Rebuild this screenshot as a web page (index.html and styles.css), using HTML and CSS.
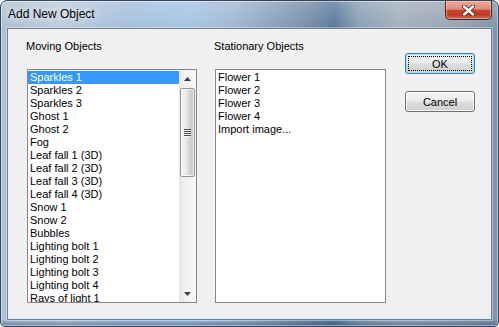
FILE: index.html
```html
<!DOCTYPE html>
<html lang="en">
<head>
    <meta charset="UTF-8">
    <title>Add New Object</title>
    <link rel="stylesheet" href="styles.css">
</head>
<body>
    <div class="window">
        <div class="titlebar">
            <span class="title">Add New Object</span>
            <div class="close">
                <svg width="13" height="11" viewBox="0 0 13 11">
                    <path d="M2 1.5 L11 9.5 M11 1.5 L2 9.5" stroke="#5b2218" stroke-width="4.2" stroke-linecap="round"/>
                    <path d="M2 1.5 L11 9.5 M11 1.5 L2 9.5" stroke="#ffffff" stroke-width="2.4" stroke-linecap="round"/>
                </svg>
            </div>
        </div>

        <div class="client">
            <div class="col col-moving">
                <div class="label">Moving Objects</div>
                <div class="listbox">
                    <div class="items">
                        <div class="item selected">Sparkles 1</div>
                        <div class="item">Sparkles 2</div>
                        <div class="item">Sparkles 3</div>
                        <div class="item">Ghost 1</div>
                        <div class="item">Ghost 2</div>
                        <div class="item">Fog</div>
                        <div class="item">Leaf fall 1 (3D)</div>
                        <div class="item">Leaf fall 2 (3D)</div>
                        <div class="item">Leaf fall 3 (3D)</div>
                        <div class="item">Leaf fall 4 (3D)</div>
                        <div class="item">Snow 1</div>
                        <div class="item">Snow 2</div>
                        <div class="item">Bubbles</div>
                        <div class="item">Lighting bolt 1</div>
                        <div class="item">Lighting bolt 2</div>
                        <div class="item">Lighting bolt 3</div>
                        <div class="item">Lighting bolt 4</div>
                        <div class="item">Rays of light 1</div>
                    </div>
                    <div class="scrollbar">
                        <div class="sb-btn">
                            <svg width="7" height="4" viewBox="0 0 7 4"><polygon points="0,4 3.5,0 7,4" fill="#3d3d3d"/></svg>
                        </div>
                        <div class="sb-track">
                            <div class="thumb">
                                <div class="grip"></div>
                            </div>
                        </div>
                        <div class="sb-btn">
                            <svg width="7" height="4" viewBox="0 0 7 4"><polygon points="0,0 7,0 3.5,4" fill="#3d3d3d"/></svg>
                        </div>
                    </div>
                </div>
            </div>

            <div class="col col-stationary">
                <div class="label">Stationary Objects</div>
                <div class="listbox">
                    <div class="items">
                        <div class="item">Flower 1</div>
                        <div class="item">Flower 2</div>
                        <div class="item">Flower 3</div>
                        <div class="item">Flower 4</div>
                        <div class="item">Import image...</div>
                    </div>
                </div>
            </div>

            <div class="buttons">
                <button class="btn default">OK</button>
                <button class="btn">Cancel</button>
            </div>
        </div>
    </div>
</body>
</html>
```

FILE: styles.css
```css
* {
    margin: 0;
    padding: 0;
    box-sizing: border-box;
}

body {
    width: 499px;
    height: 327px;
    overflow: hidden;
    background: #ffffff;
    font-family: "Liberation Sans", Arial, sans-serif;
    font-size: 11px;
    color: #000;
}

/* window frame (aero glass look) */
.window {
    width: 499px;
    height: 327px;
    border: 1px solid #34465b;
    border-radius: 7px 7px 5px 5px;
    padding: 0 6px 6px 6px;
    display: flex;
    flex-direction: column;
    background:
        linear-gradient(0deg, rgba(30, 65, 110, 0.5) 0, rgba(30, 65, 110, 0) 7px),
        linear-gradient(180deg, rgba(255, 255, 255, 0.2) 0, rgba(255, 255, 255, 0) 28px),
        linear-gradient(90deg, #afc0d2 0%, #bccbdb 12%, #a5bfdc 25%, #a6c3e5 38%, #9fb7d1 47%,
            #859eb8 56%, #738ca6 62%, #587a9c 67%, #899fb3 72%, #a2afbc 80%, #99a6b3 90%, #8194a9 100%);
    box-shadow: inset 0 0 0 1px rgba(255, 255, 255, 0.45);
}

.titlebar {
    height: 27px;
    display: flex;
    align-items: flex-start;
}

.title {
    margin-left: 1px;
    padding-top: 6px;
    font-size: 12px;
    line-height: 15px;
    color: #000;
    text-shadow: 0 0 6px rgba(255, 255, 255, 0.9), 0 0 10px rgba(255, 255, 255, 0.6);
}

.close {
    margin-left: auto;
    width: 47px;
    height: 19px;
    border: 1px solid #5c2219;
    border-top: none;
    border-radius: 0 0 5px 5px;
    background: linear-gradient(180deg, #e8aa9c 0%, #dc8e7d 45%, #c9462f 52%, #bf3a22 75%, #d4684f 100%);
    box-shadow: inset 0 0 0 1px rgba(255, 220, 210, 0.45);
    display: flex;
    align-items: center;
    justify-content: center;
    padding-top: 1px;
}

/* client area */
.client {
    flex: 1;
    background: #f0f0f0;
    border: 1px solid #6b7f96;
    box-shadow: 0 0 0 1px rgba(255, 255, 255, 0.35);
    display: flex;
    align-items: flex-start;
    padding: 11px 0 0 18px;
}

.col-moving {
    width: 171px;
}

.col-stationary {
    width: 172px;
    margin-left: 17px;
}

.label {
    line-height: 13px;
    margin-bottom: 16px;
}

.listbox {
    margin-left: 1px;
    height: 234px;
    border: 1px solid #828790;
    background: #fff;
    display: flex;
}

.items {
    flex: 1;
    overflow: hidden;
    padding-top: 1px;
}

.item {
    height: 13px;
    line-height: 13px;
    padding-left: 2px;
    white-space: nowrap;
}

.item.selected {
    background: #3399ff;
    color: #fff;
}

/* scrollbar */
.scrollbar {
    width: 17px;
    display: flex;
    flex-direction: column;
    background: linear-gradient(90deg, #e6e6e6 0%, #f2f2f2 40%, #f6f6f6 100%);
}

.sb-btn {
    height: 17px;
    display: flex;
    align-items: center;
    justify-content: center;
}

.sb-track {
    flex: 1;
    padding: 1px 1px 0 1px;
}

.thumb {
    height: 89px;
    border: 1px solid #959595;
    border-radius: 2px;
    background: linear-gradient(90deg, #f4f4f4 0%, #e9e9e9 45%, #d9d9d9 55%, #c4c4c4 100%);
    box-shadow: inset 0 0 0 1px rgba(255, 255, 255, 0.7);
    display: flex;
    align-items: center;
    justify-content: center;
}

.grip {
    width: 7px;
    height: 8px;
    background: repeating-linear-gradient(180deg, #4e4e4e 0, #4e4e4e 1px, #f4f4f4 1px, #f4f4f4 2px);
}

/* buttons */
.buttons {
    width: 70px;
    margin-left: 19px;
    padding-top: 13px;
    display: flex;
    flex-direction: column;
    gap: 17px;
}

.btn {
    position: relative;
    width: 70px;
    height: 21px;
    border: 1px solid #707070;
    border-radius: 3px;
    background: linear-gradient(180deg, #f2f2f2 0%, #ebebeb 48%, #dddddd 52%, #cfcfcf 100%);
    box-shadow: inset 0 0 0 1px rgba(255, 255, 255, 0.8);
    font-family: "Liberation Sans", Arial, sans-serif;
    font-size: 11px;
    color: #000;
}

.btn.default {
    border-color: #3c7fb1;
    box-shadow: inset 0 0 0 1px #9fdcf5;
}

.btn.default::after {
    content: "";
    position: absolute;
    left: 2px;
    top: 2px;
    right: 2px;
    bottom: 2px;
    border: 1px dotted #000;
}
```
